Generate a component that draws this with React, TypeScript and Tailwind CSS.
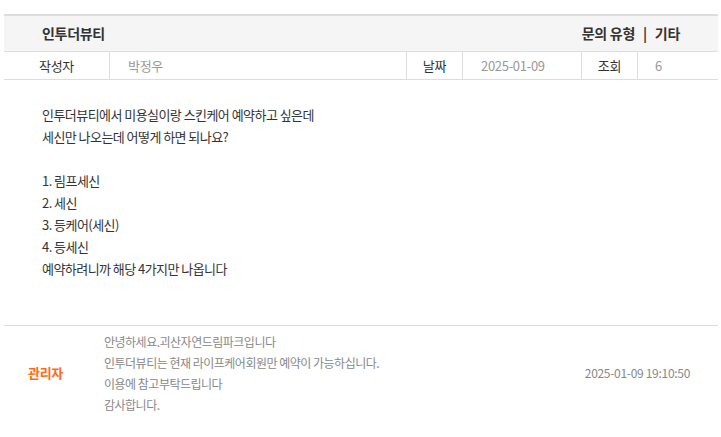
import React from "react";

const font = { fontFamily: '"Noto Sans CJK KR", "Noto Sans", sans-serif' };

const bodyLines = [
  "인투더뷰티에서 미용실이랑 스킨케어 예약하고 싶은데",
  "세신만 나오는데 어떻게 하면 되나요?",
  "",
  "1. 림프세신",
  "2. 세신",
  "3. 등케어(세신)",
  "4. 등세신",
  "예약하려니까 해당 4가지만 나옵니다",
];

const replyLines = [
  "안녕하세요.괴산자연드림파크입니다",
  "인투더뷰티는 현재 라이프케어회원만 예약이 가능하십니다.",
  "이용에 참고부탁드립니다",
  "감사합니다.",
];

const App = () => {
  return (
    <div className="min-h-[437px] bg-white pt-[14px]" style={font}>
      <div className="mx-[4px] w-[714px]">
        {/* title */}
        <div className="flex h-[38px] items-center justify-between border-t-2 border-b border-[#dddddd] bg-[#f5f5f5] pl-[38px] pr-[38px] text-[14px] font-bold tracking-[-0.3px] text-[#333333]">
          <span>인투더뷰티</span>
          <span className="flex items-center gap-[8px]">
            <span>문의 유형</span>
            <span>|</span>
            <span>기타</span>
          </span>
        </div>

        {/* meta */}
        <div className="flex h-[28px] items-center border-b border-[#dddddd] text-[13px] tracking-[-0.3px]">
          <div className="flex h-full w-[106px] items-center justify-center border-r border-[#dddddd] text-[#333333]">
            작성자
          </div>
          <div className="flex h-full flex-1 items-center pl-[18px] text-[#999999]">박정우</div>
          <div className="flex h-full w-[57px] items-center justify-center border-x border-[#dddddd] text-[#333333]">
            날짜
          </div>
          <div className="flex h-full w-[118px] items-center pl-[18px] text-[#999999]">2025-01-09</div>
          <div className="flex h-full w-[57px] items-center justify-center border-x border-[#dddddd] text-[#333333]">
            조회
          </div>
          <div className="flex h-full w-[80px] items-center pl-[17px] text-[#999999]">6</div>
        </div>

        {/* body */}
        <div className="px-[38px] pt-[24px] pb-[45px] text-[13px] leading-[22px] tracking-[-0.55px] text-[#333333]">
          {bodyLines.map((line, i) => (
            <p key={i} className="h-[22px]">
              {line}
            </p>
          ))}
        </div>

        {/* reply */}
        <div className="flex items-center border-t border-[#dddddd] py-[5px]">
          <div className="w-[100px] pl-[24px] text-[13px] font-bold tracking-[-0.3px] text-[#ff6a13]">관리자</div>
          <div className="flex-1 text-[12px] leading-[21px] tracking-[-0.5px] text-[#888888]">
            {replyLines.map((line, i) => (
              <p key={i}>{line}</p>
            ))}
          </div>
          <div className="pr-[28px] text-[12px] tracking-[-0.3px] text-[#888888]">2025-01-09 19:10:50</div>
        </div>
      </div>
    </div>
  );
};

export default App;
